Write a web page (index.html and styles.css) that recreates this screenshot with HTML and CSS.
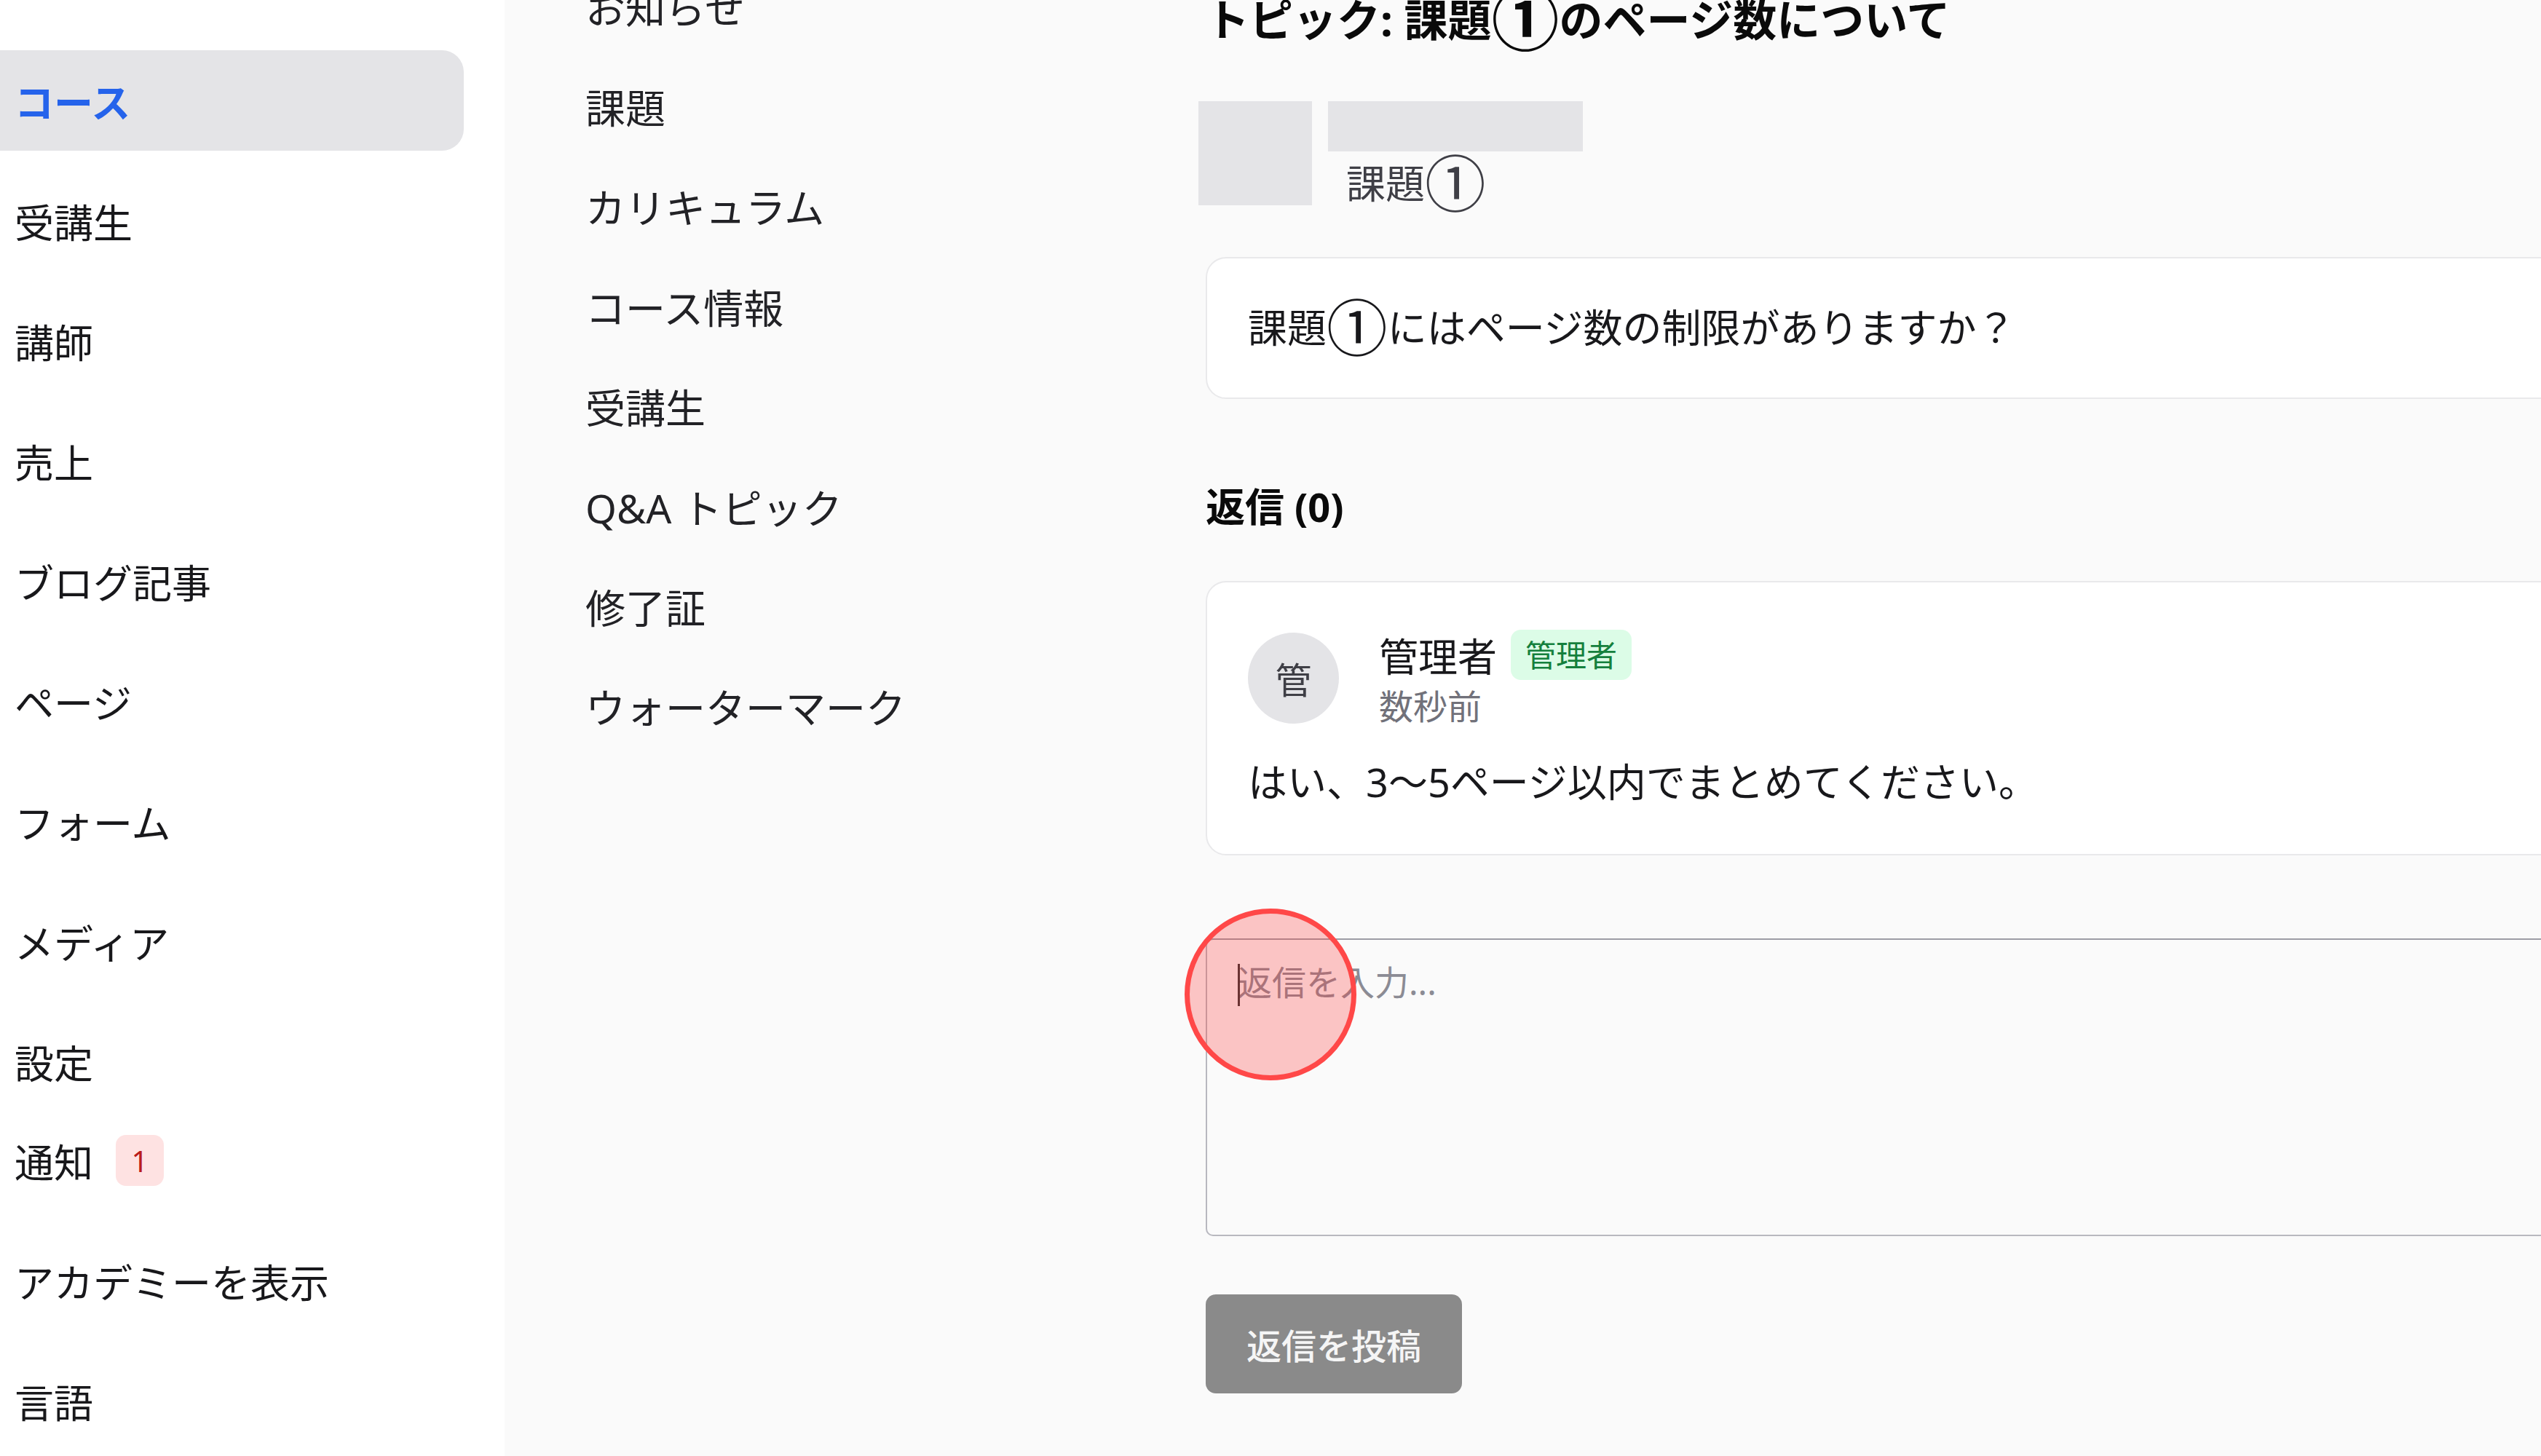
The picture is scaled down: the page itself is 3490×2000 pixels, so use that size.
FILE: index.html
```html
<!DOCTYPE html>
<html lang="ja">
<head>
<meta charset="utf-8">
<title>トピック</title>
<link rel="stylesheet" href="styles.css">
</head>
<body>
<div class="layout">
  <aside class="sidebar">
    <nav class="nav">
      <a class="nav-item active">コース</a>
      <a class="nav-item">受講生</a>
      <a class="nav-item">講師</a>
      <a class="nav-item">売上</a>
      <a class="nav-item">ブログ記事</a>
      <a class="nav-item">ページ</a>
      <a class="nav-item">フォーム</a>
      <a class="nav-item">メディア</a>
      <a class="nav-item tight">設定</a>
      <a class="nav-item">通知<span class="count">1</span></a>
      <a class="nav-item">アカデミーを表示</a>
      <a class="nav-item">言語</a>
    </nav>
  </aside>
  <div class="subnav">
    <ul class="subnav-list">
      <li class="subnav-item">お知らせ</li>
      <li class="subnav-item">課題</li>
      <li class="subnav-item">カリキュラム</li>
      <li class="subnav-item">コース情報</li>
      <li class="subnav-item">受講生</li>
      <li class="subnav-item">Q&amp;A トピック</li>
      <li class="subnav-item">修了証</li>
      <li class="subnav-item">ウォーターマーク</li>
    </ul>
  </div>
  <main class="main">
    <div class="main-inner">
      <h1 class="title">トピック: 課題<span class="circled">①</span>のページ数について</h1>
      <div class="resource">
        <div class="thumb"></div>
        <div class="resource-info">
          <div class="resource-img"></div>
          <div class="resource-title">課題<span class="circled">①</span></div>
        </div>
      </div>
      <div class="question-card"><span>課題<span class="circled">①</span>にはページ数の制限がありますか？</span></div>
      <h2 class="replies-heading">返信 (0)</h2>
      <div class="reply-card">
        <div class="reply-head">
          <div class="avatar">管</div>
          <div class="reply-meta">
            <div class="name-row">
              <span class="name">管理者</span>
              <span class="role">管理者</span>
            </div>
            <div class="time">数秒前</div>
          </div>
        </div>
        <p class="reply-body">はい、3〜5ページ以内でまとめてください。</p>
      </div>
      <div class="reply-form">
        <textarea class="reply-input" placeholder="返信を入力..."></textarea>
        <span class="caret"></span>
        <span class="touch"></span>
      </div>
      <button class="submit">返信を投稿</button>
    </div>
  </main>
</div>
</body>
</html>
```
FILE: styles.css
```css
* { box-sizing: border-box; }
html, body { margin: 0; padding: 0; }
body {
  background: #fafafa;
  font-family: "Noto Sans", "Noto Sans CJK JP", sans-serif;
  color: #18181b;
  overflow: hidden;
  width: 3490px;
  height: 2000px;
}
.layout {
  display: flex;
  width: 3490px;
  height: 2000px;
  overflow: hidden;
}

/* sidebar */
.sidebar {
  flex: 0 0 693px;
  background: #ffffff;
  padding-top: 69px;
}
.nav { display: flex; flex-direction: column; }
.nav-item {
  width: 637px;
  height: 138px;
  display: flex;
  align-items: center;
  padding-left: 20px;
  margin-bottom: 27px;
  font-size: 54px;
  color: #18181b;
  border-radius: 0 30px 30px 0;
}
.nav-item.tight { margin-bottom: -2px; }
.nav-item.active {
  background: #e4e4e7;
  color: #2563eb;
  font-weight: 700;
}
.count {
  display: inline-flex;
  align-items: center;
  justify-content: center;
  width: 66px;
  height: 70px;
  margin-left: 31px;
  border-radius: 14px;
  background: #fee2e2;
  color: #b91c1c;
  font-size: 40px;
}

/* sub navigation */
.subnav {
  flex: 0 0 963px;
  padding-left: 111px;
}
.subnav-list {
  list-style: none;
  margin: -61px 0 0;
  padding: 0;
}
.subnav-item {
  height: 137.4px;
  display: flex;
  align-items: center;
  font-size: 55px;
  color: #222226;
}

/* circled numerals drawn larger, as in the reference font */
.circled {
  font-size: 1.55em;
  line-height: 0;
  vertical-align: -0.13em;
  font-weight: 400;
}
.title .circled { font-weight: 700; }

/* main */
.main { flex: 0 0 2100px; }
.main-inner { margin-top: -17px; }
.title {
  margin: 0;
  font-size: 60px;
  line-height: 88px;
  font-weight: 700;
  color: #0a0a0a;
}
.resource {
  display: flex;
  gap: 22px;
  margin-top: 68px;
  margin-left: -10px;
}
.thumb {
  width: 156px;
  height: 143px;
  background: #e4e4e7;
}
.resource-info { display: flex; flex-direction: column; }
.resource-img {
  width: 350px;
  height: 69px;
  background: #e4e4e7;
}
.resource-title {
  margin-top: 4px;
  padding-left: 25px;
  font-size: 54px;
  line-height: 81px;
  height: 81px;
  color: #3f3f46;
}
.question-card {
  margin-top: 60px;
  height: 195px;
  display: flex;
  align-items: center;
  padding: 0 56px;
  background: #ffffff;
  border: 2px solid #e9e9eb;
  border-radius: 28px;
  font-size: 54px;
  line-height: 81px;
  color: #18181b;
}
.replies-heading {
  margin: 108px 0 0;
  font-size: 54px;
  line-height: 81px;
  font-weight: 700;
  color: #0a0a0a;
}
.reply-card {
  margin-top: 61px;
  background: #ffffff;
  border: 2px solid #e9e9eb;
  border-radius: 28px;
  padding: 65px 56px 58px;
}
.reply-head {
  display: flex;
  align-items: center;
  gap: 55px;
}
.avatar {
  flex: 0 0 125px;
  width: 125px;
  height: 125px;
  border-radius: 50%;
  background: #e4e4e7;
  display: flex;
  align-items: center;
  justify-content: center;
  font-size: 50px;
  color: #3f3f46;
}
.reply-meta { display: flex; flex-direction: column; }
.name-row {
  display: flex;
  align-items: center;
  gap: 19px;
  height: 69px;
}
.name { font-size: 54px; color: #18181b; }
.role {
  height: 69px;
  line-height: 69px;
  padding: 0 20px;
  border-radius: 14px;
  background: #dcfce7;
  color: #15803d;
  font-size: 42px;
}
.time {
  margin-top: 8px;
  font-size: 47px;
  line-height: 56px;
  color: #71717a;
}
.reply-body {
  margin: 36px 0 0;
  font-size: 54px;
  line-height: 81px;
  color: #18181b;
}
.reply-form {
  position: relative;
  margin-top: 114px;
}
.reply-input {
  display: block;
  width: 100%;
  height: 409px;
  padding: 23px 42px;
  border: 2px solid #b8b8bf;
  border-top-color: #9d9da5;
  border-radius: 10px;
  background: #fafafa;
  font-family: "Noto Sans", "Noto Sans CJK JP", sans-serif;
  font-size: 47px;
  line-height: 1.5;
  color: #18181b;
  resize: none;
  outline: none;
}
.reply-input::placeholder { color: #8b8b94; }
.caret {
  position: absolute;
  left: 44px;
  top: 35px;
  width: 3px;
  height: 58px;
  background: #333;
}
.touch {
  position: absolute;
  left: -29px;
  top: -41px;
  width: 236px;
  height: 236px;
  border-radius: 50%;
  background: rgba(255, 50, 50, 0.27);
  border: 7px solid #ff4848;
}
.submit {
  display: block;
  margin-top: 80px;
  height: 136px;
  padding: 0 56px;
  border: none;
  border-radius: 14px;
  background: #8a8a8a;
  color: #f5f5f5;
  font-family: "Noto Sans", "Noto Sans CJK JP", sans-serif;
  font-size: 48px;
  font-weight: 500;
}
```
